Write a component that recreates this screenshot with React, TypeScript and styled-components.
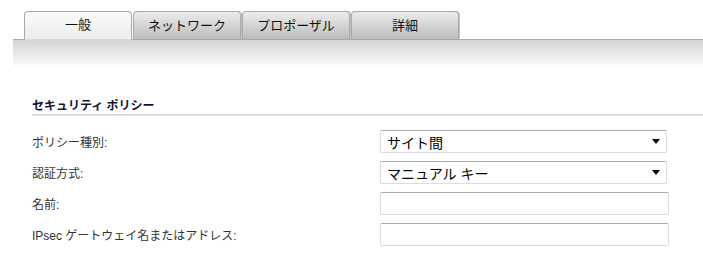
import React from "react";
import styled, { createGlobalStyle } from "styled-components";

const GlobalStyle = createGlobalStyle`
  body {
    margin: 0;
    background: #fff;
    font-family: "Liberation Sans", "Noto Sans CJK JP", sans-serif;
  }
`;

const tabs = ["一般", "ネットワーク", "プロポーザル", "詳細"];

const Page = styled.div`
  width: 703px;
  height: 272px;
  overflow: hidden;
`;

const TabBar = styled.div`
  display: flex;
  align-items: flex-start;
  gap: 1px;
  padding: 11px 0 0 24px;
  height: 39px;
  box-sizing: border-box;
  position: relative;
  z-index: 1;
`;

const Tab = styled.div<{ $active?: boolean }>`
  width: 108px;
  height: ${(p) => (p.$active ? "30px" : "28px")};
  flex-shrink: 0;
  box-sizing: border-box;
  display: flex;
  align-items: center;
  justify-content: center;
  font-size: 13px;
  color: #111;
  border: 1px solid #a9a9a9;
  border-bottom: ${(p) => (p.$active ? "2px solid #d6dbe9" : "none")};
  border-radius: 4px 4px 0 0;
  background: ${(p) =>
    p.$active
      ? "linear-gradient(#fbfbfb, #ececec)"
      : "linear-gradient(#ececec, #bdbdbd)"};
  box-shadow: ${(p) => (p.$active ? "none" : "1px 0 0 #c4c4c4")};
  padding-bottom: ${(p) => (p.$active ? "4px" : "2px")};
`;

const Band = styled.div`
  margin: 0 0 0 13px;
  border-top: 1px solid #a9a9bb;
  height: 28px;
  background: linear-gradient(#d3d3d3, #ffffff);
`;

const Content = styled.div`
  padding: 28px 0 0 32px;
`;

const SectionTitle = styled.div`
  font-size: 12px;
  font-weight: bold;
  color: #141432;
  padding-bottom: 1px;
  border-bottom: 2px solid #d3e0ea;
  margin-bottom: 10px;
`;

const Row = styled.div`
  display: flex;
  align-items: center;
  height: 31px;
`;

const Label = styled.div`
  width: 348px;
  font-size: 12px;
  color: #333;
`;

const SelectBox = styled.div`
  width: 287px;
  height: 23px;
  box-sizing: border-box;
  display: flex;
  align-items: center;
  justify-content: space-between;
  padding: 0 6px 0 6px;
  font-size: 14px;
  color: #000;
  border: 1px solid #d9dde6;
  border-top-color: #ababab;
  border-radius: 2px;
  background: #fff;
`;

const Arrow = styled.span`
  width: 0;
  height: 0;
  border-left: 4px solid transparent;
  border-right: 4px solid transparent;
  border-top: 5px solid #000;
`;

const TextBox = styled.div`
  width: 289px;
  height: 23px;
  box-sizing: border-box;
  border: 1px solid #d9dde6;
  border-top-color: #ababab;
  border-radius: 2px;
  background: #fff;
`;

export default function App() {
  return (
    <Page>
      <GlobalStyle />
      <TabBar>
        {tabs.map((t, i) => (
          <Tab key={t} $active={i === 0}>
            {t}
          </Tab>
        ))}
      </TabBar>
      <Band />
      <Content>
        <SectionTitle>セキュリティ ポリシー</SectionTitle>
        <Row>
          <Label>ポリシー種別:</Label>
          <SelectBox>
            サイト間
            <Arrow />
          </SelectBox>
        </Row>
        <Row>
          <Label>認証方式:</Label>
          <SelectBox>
            マニュアル キー
            <Arrow />
          </SelectBox>
        </Row>
        <Row>
          <Label>名前:</Label>
          <TextBox />
        </Row>
        <Row>
          <Label>IPsec ゲートウェイ名またはアドレス:</Label>
          <TextBox />
        </Row>
      </Content>
    </Page>
  );
}
